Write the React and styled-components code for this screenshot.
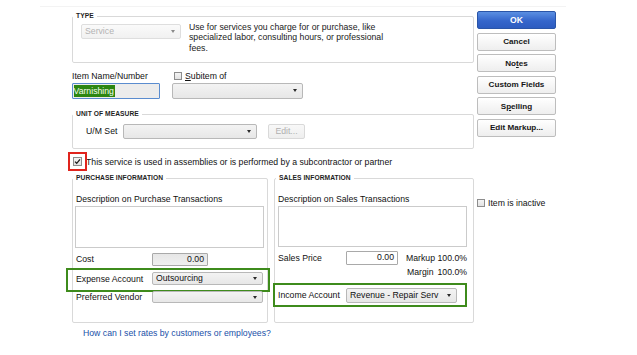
import React from 'react';
import styled, { createGlobalStyle, css } from 'styled-components';

const Global = createGlobalStyle`
  html, body { margin: 0; padding: 0; background: #fff; }
  body {
    font-family: "Liberation Sans", Arial, sans-serif;
    font-size: 8.7px;
    color: #111;
  }
  * { box-sizing: border-box; }
`;

const Frame = styled.div`
  margin: 6px 0 0 40px;
  width: 526px;
  height: 349px;
  border-top: 1px solid #f3f3f3;
  padding: 4px 0 0 32px;
  display: flex;
  gap: 3px;
  align-items: flex-start;
`;

const LeftColumn = styled.div`
  width: 402px;
  display: flex;
  flex-direction: column;
`;

const RightColumn = styled.div`
  width: 79px;
  display: flex;
  flex-direction: column;
  gap: 3.6px;
`;

const Group = styled.fieldset`
  margin: ${p => p.$mt || 0}px 0 0 0;
  padding: 0;
  border: 1px solid #d9d9d9;
  border-radius: 2px;
  min-width: 0;
  flex: ${p => (p.$flex ? '0 0 ' + p.$flex + 'px' : 'none')};
  display: flex;
  flex-direction: column;
`;

const Legend = styled.legend`
  padding: 0 3px;
  margin-left: ${p => p.$ml || 0}px;
  font-size: 6.7px;
  font-weight: bold;
  line-height: 10px;
  color: #1e1e1e;
  letter-spacing: 0.05px;
`;

const TypeBody = styled.div`
  display: flex;
  align-items: flex-start;
  gap: 8px;
  padding: 3px 6px 9px 8px;
`;

const TypeText = styled.div`
  margin-top: -2.25px;
  line-height: 10.5px;
  color: #1a1a1a;
`;

const Select = styled.div`
  width: ${p => p.$w}px;
  height: ${p => p.$h}px;
  flex: none;
  display: flex;
  align-items: center;
  justify-content: space-between;
  padding: 0 5px 0 3px;
  border-radius: 2px;
  line-height: 1;
  ${p =>
    p.$tone === 'disabled'
      ? css`
          border: 1px solid #dedede;
          background: linear-gradient(#fafafa, #f1f1f1);
          color: #b3b3b3;
        `
      : css`
          border: 1px solid #b8b8b8;
          background: linear-gradient(#f3f3f3, #e7e7e7);
          color: #111;
        `}
`;

const Arrow = styled.span`
  width: 0;
  height: 0;
  border-left: 2.8px solid transparent;
  border-right: 2.8px solid transparent;
  border-top: 3.2px solid ${p => (p.$light ? '#8a8a8a' : '#2a2a2a')};
`;

const Dropdown = ({ w, h = 15, value = '', tone }) => (
  <Select $w={w} $h={h} $tone={tone}>
    <span>{value}</span>
    <Arrow $light={tone === 'disabled'} />
  </Select>
);

const NameRow = styled.div`
  display: flex;
  gap: 12px;
  margin-top: 8px;
`;

const Field = styled.div`
  display: flex;
  flex-direction: column;
  gap: 1.5px;
  width: ${p => p.$w}px;
`;

const Label = styled.span`
  line-height: 10px;
  white-space: nowrap;
  flex: none;
  width: ${p => (p.$w ? p.$w + 'px' : 'auto')};
`;

const InlineCheck = styled.label`
  display: flex;
  align-items: center;
  gap: 3px;
  height: 10px;
  margin-left: 2px;
  white-space: nowrap;
`;

const Box = styled.span`
  width: ${p => p.$s || 8}px;
  height: ${p => p.$s || 8}px;
  flex: none;
  border: 1px solid #8d8d8d;
  background: linear-gradient(#f4f4f4, #e2e2e2);
  display: flex;
  align-items: center;
  justify-content: center;
`;

const NameInput = styled.div`
  width: 88px;
  height: 16.5px;
  border: 1px solid #5a8ccf;
  border-radius: 1px;
  background: #ececec;
  padding: 1px 0 1px 0.5px;
  display: flex;
`;

const Selected = styled.span`
  background: #2c8612;
  color: #f4fff0;
  line-height: 13.5px;
  padding: 0 1px 0 0;
`;

const UomBody = styled.div`
  display: flex;
  align-items: center;
  padding: 4.5px 6px 9px 13px;
`;

const SmallButton = styled.div`
  width: 37px;
  height: 15px;
  margin-left: 11px;
  border: 1px solid #d9d9d9;
  border-radius: 2px;
  background: linear-gradient(#f8f8f8, #eeeeee);
  color: #b0b0b0;
  display: flex;
  align-items: center;
  justify-content: center;
`;

const CheckRow = styled.div`
  display: flex;
  align-items: center;
  height: 19px;
  margin-top: 3.5px;
  margin-left: -4px;
  line-height: 10px;
`;

const RedFrame = styled.span`
  width: 19px;
  height: 19px;
  flex: none;
  border: 2px solid #e0241d;
  display: flex;
  align-items: center;
  justify-content: center;
  margin-right: -1px;
  position: relative;
  z-index: 1;
  background: #fff;
`;

const InfoRow = styled.div`
  display: flex;
  gap: 6px;
  margin-top: 2px;
  align-items: stretch;
`;

const InfoBody = styled.div`
  display: flex;
  flex-direction: column;
  padding: 10.5px 3px 19px 3px;
`;

const TextArea = styled.div`
  margin-top: 2px;
  margin-left: ${p => p.$ml || 0}px;
  width: 189px;
  height: ${p => p.$h}px;
  border: 1px solid #cbcbcb;
  background: #fff;
`;

const FormRow = styled.div`
  display: flex;
  align-items: ${p => p.$align || 'center'};
  margin-top: ${p => p.$mt}px;
  position: relative;
  ${p =>
    p.$highlight &&
    css`
      &::after {
        content: '';
        position: absolute;
        top: ${p.$highlight[0]}px;
        right: ${p.$highlight[1]}px;
        bottom: ${p.$highlight[2]}px;
        left: ${p.$highlight[3]}px;
        border: 2px solid #3e8b1c;
        pointer-events: none;
      }
    `}
`;

const NumberBox = styled.div`
  width: ${p => p.$w}px;
  height: ${p => p.$h}px;
  padding: 0 3px;
  display: flex;
  align-items: center;
  justify-content: flex-end;
  border: 1px solid #a9a9a9;
  border-radius: 1px;
  background: ${p => (p.$gray ? 'linear-gradient(#e6e6e6, #f0f0f0)' : '#fff')};
  line-height: 1;
`;

const Ratios = styled.div`
  margin-left: 8px;
  width: 61px;
  display: flex;
  flex-direction: column;
  line-height: 14px;
`;

const RatioLine = styled.div`
  display: flex;
  justify-content: space-between;
  padding-left: ${p => p.$pl || 0}px;
`;

const HelpLink = styled.a`
  margin: 5px 0 0 11px;
  line-height: 10px;
  color: #2050a8;
  text-decoration: none;
  cursor: pointer;
`;

const Button = styled.div`
  height: 18px;
  border-radius: 2px;
  display: flex;
  align-items: center;
  justify-content: center;
  font-weight: bold;
  font-size: 8.1px;
  ${p =>
    p.$primary
      ? css`
          border: 1px solid #2a55a8;
          background: linear-gradient(#5b8fe2, #3566cb 55%, #2d5cc0);
          color: #fff;
          font-size: 8.6px;
        `
      : css`
          border: 1px solid #bdbdbd;
          background: linear-gradient(#ffffff, #eeeeee);
          color: #161616;
        `}
`;

const U = styled.span`
  text-decoration: underline;
  text-underline-offset: 1px;
`;

const Inactive = styled.label`
  display: flex;
  align-items: center;
  gap: 3px;
  margin-top: 57px;
  line-height: 10px;
  white-space: nowrap;
`;

const Check = () => (
  <svg width="7" height="7" viewBox="0 0 7 7">
    <path d="M1 3.6 L2.7 5.3 L6 1.4" fill="none" stroke="#1d1d1d" strokeWidth="1.3" />
  </svg>
);

export default function App() {
  return (
    <>
      <Global />
      <Frame>
        <LeftColumn>
          <Group>
            <Legend>TYPE</Legend>
            <TypeBody>
              <Dropdown w={100} value="Service" tone="disabled" />
              <TypeText>
                Use for services you charge for or purchase, like
                <br />
                specialized labor, consulting hours, or professional
                <br />
                fees.
              </TypeText>
            </TypeBody>
          </Group>

          <NameRow>
            <Field $w={88}>
              <Label>Item Name/Number</Label>
              <NameInput>
                <Selected>Varnishing</Selected>
              </NameInput>
            </Field>
            <Field $w={131}>
              <InlineCheck>
                <Box />
                <span>
                  <U>S</U>ubitem of
                </span>
              </InlineCheck>
              <Dropdown w={131} h={16} />
            </Field>
          </NameRow>

          <Group $mt={10}>
            <Legend>UNIT OF MEASURE</Legend>
            <UomBody>
              <Label $w={37}>U/M Set</Label>
              <Dropdown w={134} />
              <SmallButton>Edit...</SmallButton>
            </UomBody>
          </Group>

          <CheckRow>
            <RedFrame>
              <Box $s={9}>
                <Check />
              </Box>
            </RedFrame>
            <span>This service is used in assemblies or is performed by a subcontractor or partner</span>
          </CheckRow>

          <InfoRow>
            <Group $flex={196}>
              <Legend>PURCHASE INFORMATION</Legend>
              <InfoBody>
                <Label>Description on Purchase Transactions</Label>
                <TextArea $h={42} $ml={-1} />
                <FormRow $mt={5}>
                  <Label $w={76}>Cost</Label>
                  <NumberBox $w={56} $h={13} $gray>0.00</NumberBox>
                </FormRow>
                <FormRow $mt={6.5} $highlight={[-4.5, -6, -6.5, -10]}>
                  <Label $w={76}>Expense Account</Label>
                  <Dropdown w={111} h={13} value="Outsourcing" />
                </FormRow>
                <FormRow $mt={5.5}>
                  <Label $w={76}>Preferred Vendor</Label>
                  <Dropdown w={111} h={12.5} />
                </FormRow>
              </InfoBody>
            </Group>

            <Group $flex={200}>
              <Legend $ml={1}>SALES INFORMATION</Legend>
              <InfoBody>
                <Label>Description on Sales Transactions</Label>
                <TextArea $h={41} />
                <FormRow $mt={4} $align="flex-start">
                  <Label $w={68} style={{ marginTop: 2 }}>Sales Price</Label>
                  <NumberBox $w={52} $h={14}>0.00</NumberBox>
                  <Ratios>
                    <RatioLine>
                      <span>Markup</span>
                      <span>100.0%</span>
                    </RatioLine>
                    <RatioLine $pl={1}>
                      <span>Margin</span>
                      <span>100.0%</span>
                    </RatioLine>
                  </Ratios>
                </FormRow>
                <FormRow $mt={9} $highlight={[-5, 3, -4, -5]}>
                  <Label $w={68}>Income Account</Label>
                  <Dropdown w={111} h={15} value="Revenue - Repair Serv" />
                </FormRow>
              </InfoBody>
            </Group>
          </InfoRow>

          <HelpLink>How can I set rates by customers or employees?</HelpLink>
        </LeftColumn>

        <RightColumn>
          <Button $primary>OK</Button>
          <Button>Cancel</Button>
          <Button>
            <span>
              No<U>t</U>es
            </span>
          </Button>
          <Button>Custom Fields</Button>
          <Button>
            <span>
              S<U>p</U>elling
            </span>
          </Button>
          <Button>Edit Markup...</Button>
          <Inactive>
            <Box />
            <span>Item is inactive</span>
          </Inactive>
        </RightColumn>
      </Frame>
    </>
  );
}
